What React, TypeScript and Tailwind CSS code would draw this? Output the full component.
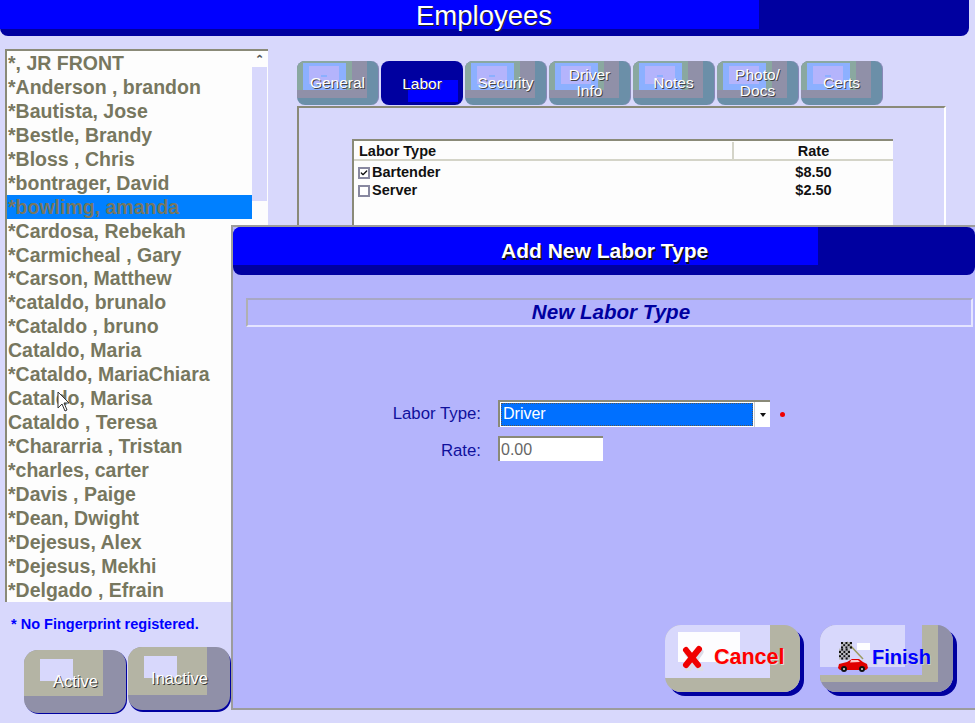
import React from "react";
import { Check } from "lucide-react";

const employees = [
  "*, JR FRONT",
  "*Anderson , brandon",
  "*Bautista, Jose",
  "*Bestle, Brandy",
  "*Bloss , Chris",
  "*bontrager, David",
  "*bowlimg, amanda",
  "*Cardosa, Rebekah",
  "*Carmicheal , Gary",
  "*Carson, Matthew",
  "*cataldo, brunalo",
  "*Cataldo , bruno",
  "Cataldo, Maria",
  "*Cataldo, MariaChiara",
  "Cataldo, Marisa",
  "Cataldo , Teresa",
  "*Chararria , Tristan",
  "*charles, carter",
  "*Davis , Paige",
  "*Dean, Dwight",
  "*Dejesus, Alex",
  "*Dejesus, Mekhi",
  "*Delgado , Efrain",
];

const tabs = ["General", "Labor", "Security", "Driver\nInfo", "Notes", "Photo/\nDocs", "Certs"];

function Tab({ label }: { label: string }) {
  if (label === "Labor") {
    return (
      <div className="relative h-[44px] w-[82px] overflow-hidden rounded-lg bg-[#0000a0]">
        <div className="absolute left-[27px] top-[19px] h-[22px] w-[50px] bg-[#0000ff]" />
        <span className="relative flex h-full items-center justify-center pt-[1px] text-[15.5px] text-white [text-shadow:1px_1px_0_#333]">Labor</span>
      </div>
    );
  }
  return (
    <div className="relative h-[44px] w-[82px] overflow-hidden rounded-lg border-r border-[#8888b8] bg-[#6b8fa8]">
      <div className="absolute left-0 top-0 h-[37px] w-[70px] bg-[#9090a8]" />
      <div className="absolute left-0 top-0 h-[29px] w-[55px] bg-[#8aa8a0]" />
      <div className="absolute left-[6px] top-[2px] h-[27px] w-[43px] bg-[#8cb0ff]" />
      <div className="absolute left-[12px] top-[5px] h-[18px] w-[30px] bg-[#b4b4fc]" />
      <div className="absolute left-[24px] top-[14px] h-[2px] w-[6px] bg-[#8cb0ff]" />
      <span className="relative flex h-full items-center justify-center whitespace-pre-line text-center text-[15.5px] leading-[16px] text-white [text-shadow:1px_1px_0_#444]">
        {label}
      </span>
    </div>
  );
}

function StateButton({ label, shadow, tan }: { label: string; shadow: string; tan: string }) {
  return (
    <div className={`relative h-[63px] w-[102px] overflow-hidden rounded-[14px] bg-[#9090a8] ${shadow}`}>
      <div className={`absolute left-0 top-0 w-[79px] bg-[#b4b4a4] ${tan}`} />
      <div className="absolute left-[16px] top-[9px] h-[22px] w-[33px] bg-[#d8d8fc]" />
      <span className="relative flex h-full items-center justify-center pl-[1px] text-[16.5px] text-white [text-shadow:1px_1px_0_#333]">{label}</span>
    </div>
  );
}

function CancelIcon() {
  return (
    <svg width="24" height="26" viewBox="0 0 24 26" className="shrink-0">
      <path d="M5 6 L18 22 M18 5 L6 22" stroke="#dcdce8" strokeWidth="6" strokeLinecap="round" transform="translate(1.5 2)" />
      <path d="M5 5 L17 20 M18 4 L5 20" stroke="#f00000" strokeWidth="6" strokeLinecap="round" />
    </svg>
  );
}

function FinishIcon() {
  const cells: React.ReactNode[] = [];
  for (let row = 0; row < 8; row++) {
    for (let col = 0; col < 5; col++) {
      cells.push(
        <rect
          key={`${row}-${col}`}
          x={1 + col * 2.2 + (row < 3 ? 2 : 0)}
          y={1 + row * 2.2}
          width="2.2"
          height="2.2"
          fill={(row + col) % 2 === 0 ? "#111" : "#bbb"}
        />
      );
    }
  }
  return (
    <svg width="32" height="32" viewBox="0 0 32 32" className="shrink-0">
      <path d="M9 1 L25 18" stroke="#9a9a60" strokeWidth="1.5" />
      {cells}
      <path d="M0 27 L1 23 L9 21 L14 18 L21 18 L25 21 L29 23 L30 27 L28 29 L2 29 Z" fill="#e00000" />
      <path d="M13 19 L20 19 L22 21 L12 21.5 Z" fill="#ffc8c8" />
      <circle cx="6" cy="28" r="3" fill="#111" />
      <circle cx="24" cy="28" r="3" fill="#111" />
      <circle cx="6" cy="28" r="1" fill="#ddd" />
      <circle cx="24" cy="28" r="1" fill="#ddd" />
    </svg>
  );
}

export default function App() {
  return (
    <div className="relative h-[723px] w-[975px] overflow-hidden bg-[#d8d8fc] font-['Liberation_Sans',Arial,sans-serif]">
      {/* title bar */}
      <div className="mr-[6px] h-[36px] overflow-hidden rounded-b-lg bg-[#0000a0]">
        <div className="flex h-[29px] w-[759px] items-center bg-[#0000ff] pl-[416px] pt-[3px]">
          <span className="text-[27.5px] leading-none text-white [text-shadow:1px_1px_0_#222]">Employees</span>
        </div>
      </div>

      <div className="flex pl-[5px] pt-[13px]">
        {/* employee list */}
        <div className="flex w-[263px] shrink-0 flex-col">
          <div className="relative h-[553px] overflow-hidden border-l-2 border-t-2 border-[#8a8a78] bg-[#fdfdfd]">
            <div className="absolute right-[1px] top-0 flex h-[150px] w-[15px] flex-col items-center">
              <span className="mt-[3px] h-[10px] text-[11px] font-bold leading-[10px] text-[#555]">⌃</span>
              <div className="mt-[3px] h-[134px] w-full bg-[#d8d8fc]" />
            </div>
            {employees.map((name, i) => (
              <div
                key={i}
                className={`h-[23.95px] pl-[1px] text-[19.5px] font-bold leading-[25px] text-[#77775f] ${name === "*bowlimg, amanda" ? "mr-[16px] bg-[#0080ff]" : ""}`}
              >
                {name}
              </div>
            ))}
          </div>
          <div className="pl-[6px] pt-[14px] text-[14.5px] font-bold leading-[16px] text-[#0000ff]">* No Fingerprint registered.</div>
          <div className="flex items-end gap-[2px] pl-[19px] pt-[15px]">
            <StateButton label="Active" shadow="shadow-[1px_1px_0_#0000a0]" tan="h-[46px]" />
            <div className="mb-[3px]">
              <StateButton label="Inactive" shadow="shadow-[1px_2px_0_#0000a0]" tan="h-[48px]" />
            </div>
          </div>
        </div>

        {/* tabs and labor table */}
        <div className="ml-[29px] w-[649px] pt-[12px]">
          <div className="flex gap-[2px]">
            {tabs.map((t) => (
              <Tab key={t} label={t} />
            ))}
          </div>
          <div className="mt-[1px] h-[300px] border-l-2 border-r-2 border-t-2 border-[#8a8a78] border-r-white pl-[53px] pr-[51px] pt-[31px]">
            <div className="h-[240px] border-l-2 border-t-2 border-[#8a8a78] bg-[#fdfdfd] text-[14.5px] font-bold text-[#111]">
              <div className="flex h-[20px] border-b-2 border-[#d4d4c8] pt-[1px] leading-[18px]">
                <div className="w-[380px] border-r-2 border-[#d4d4c8] pl-[5px]">Labor Type</div>
                <div className="flex-1 text-center">Rate</div>
              </div>
              <div className="flex h-[18px] items-center pt-[5px]">
                <div className="flex w-[380px] items-center gap-[2px] pl-[4px]">
                  <span className="flex h-[12px] w-[12px] items-center justify-center border-2 border-[#8888a0] bg-white">
                    <Check size={10} strokeWidth={4} className="text-[#111]" />
                  </span>
                  Bartender
                </div>
                <div className="flex-1 text-center">$8.50</div>
              </div>
              <div className="flex h-[18px] items-center pt-[5px]">
                <div className="flex w-[380px] items-center gap-[2px] pl-[4px]">
                  <span className="h-[12px] w-[12px] border-2 border-[#8888a0] bg-white" />
                  Server
                </div>
                <div className="flex-1 text-center">$2.50</div>
              </div>
            </div>
          </div>
        </div>
      </div>

      {/* add labor type dialog */}
      <div className="absolute left-[231px] top-[225px] flex h-[485px] w-[744px] flex-col border-b-2 border-l-2 border-t-2 border-[#9c9c9c] bg-[#b4b4fc]">
        <div className="h-[48px] overflow-hidden rounded-lg bg-[#0000a0]">
          <div className="flex h-[38px] w-[585px] items-center bg-[#0000ff] pl-[268px] pt-[9px]">
            <span className="text-[21px] font-bold leading-none text-white [text-shadow:1.5px_1.5px_0_#111]">Add New Labor Type</span>
          </div>
        </div>
        <div className="ml-[13px] mr-[2px] mt-[23px] flex h-[29px] items-center justify-center border-2 border-b-[#e4e4ff] border-l-[#b0b0b0] border-r-[#e4e4ff] border-t-[#a8a8c4]">
          <span className="pl-[3px] text-[20.6px] font-bold italic text-[#0000a0]">New Labor Type</span>
        </div>

        <div className="mt-[73px] grid grid-cols-[248px_auto] items-center gap-x-[17px] gap-y-[9px] text-[16.8px] leading-[20px] text-[#10109c]">
          <span className="text-right">Labor Type:</span>
          <div className="flex items-center">
            <div className="flex h-[27px] w-[272px] border-l-2 border-t-2 border-[#8a8a78] bg-white">
              <div className="m-[1px] flex-1 border border-dotted border-[#555] bg-[#0070ff] pl-[1px] text-[16px] leading-[20px] text-white">Driver</div>
              <div className="flex w-[16px] items-center justify-center border-l border-[#ccc]">
                <span className="h-0 w-0 border-x-[3.5px] border-t-[4px] border-x-transparent border-t-[#111]" />
              </div>
            </div>
            <span className="ml-[10px] mt-[2px] h-[5px] w-[5px] rounded-full bg-[#f00000]" />
          </div>
          <span className="pt-[4px] text-right">Rate:</span>
          <div className="h-[25px] w-[105px] border-l-2 border-t-2 border-[#8a8a78] bg-white pl-[1px] text-[16px] leading-[24px] text-[#666]">0.00</div>
        </div>

        <div className="mt-auto flex justify-end gap-[20px] pb-[16px] pr-[22px]">
          <div className="relative h-[67px] w-[135px] rounded-[16px] shadow-[4px_4px_0_#0000a0]">
            <div className="absolute inset-0 overflow-hidden rounded-[16px] bg-[#b4b4a4]">
              <div className="absolute left-0 top-0 h-[53px] w-[105px] bg-[#d8d8fc]" />
              <div className="absolute left-[13px] top-[7px] h-[30px] w-[62px] bg-[#fdfdff]" />
            </div>
            <div className="relative flex h-full items-center gap-[9px] pb-[2px] pl-[16px] text-[21.5px] font-bold text-[#ff0000] [text-shadow:1px_1px_0_#ddd]">
              <CancelIcon />
              Cancel
            </div>
          </div>
          <div className="relative h-[67px] w-[133px] rounded-[16px] shadow-[4px_4px_0_#0000a0]">
            <div className="absolute inset-0 overflow-hidden rounded-[16px] bg-[#9090a8]">
              <div className="absolute left-0 top-0 h-[57px] w-[118px] bg-[#b4b4a4]" />
              <div className="absolute left-0 top-0 h-[50px] w-[102px] bg-[#b4b4fc]" />
              <div className="absolute left-0 top-0 h-[42px] w-[85px] bg-[#d8d8fc]" />
              <div className="absolute left-[37px] top-[18px] h-[7px] w-[13px] bg-[#fdfdff]" />
            </div>
            <div className="relative flex h-full items-center gap-[2px] pb-[3px] pl-[18px] text-[20px] font-bold text-[#0000ff] [text-shadow:1px_1px_0_#ccc]">
              <FinishIcon />
              <span className="pb-[1px]">Finish</span>
            </div>
          </div>
        </div>
      </div>

      {/* mouse pointer */}
      <svg width="14" height="22" viewBox="0 0 14 22" className="absolute left-[57px] top-[391px]">
        <path d="M1 1 L1 17 L5 13 L8 20 L10 19 L7 12 L12 12 Z" fill="#fff" stroke="#333" strokeWidth="1" />
      </svg>
    </div>
  );
}
